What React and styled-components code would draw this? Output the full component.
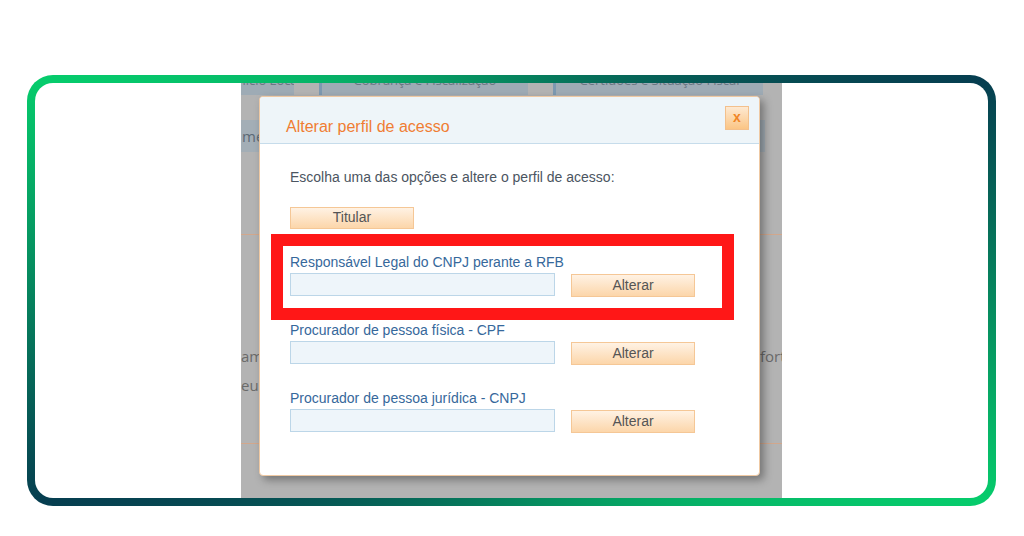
import React from 'react';
import styled, { createGlobalStyle } from 'styled-components';

const GlobalStyle = createGlobalStyle`
  html, body { margin: 0; padding: 0; background: #fff; }
  body { font-family: "Liberation Sans", Arial, sans-serif; }
`;

const Page = styled.div`
  width: 1024px;
  height: 536px;
  box-sizing: border-box;
  padding: 75px 28px 30px 27px;
`;

const Frame = styled.div`
  height: 100%;
  box-sizing: border-box;
  padding: 8px;
  border-radius: 26px;
  background: conic-gradient(from -66deg, #06cc6c 0deg, #063e50 132deg, #06cc6c 180deg, #063e50 312deg, #06cc6c 360deg);
`;

const FrameInner = styled.div`
  height: 100%;
  background: #fff;
  border-radius: 18px;
  display: flex;
  justify-content: center;
  overflow: hidden;
`;

const Shot = styled.div`
  position: relative;
  width: 541px;
  height: 100%;
  background: #b3b3b3;
  overflow: hidden;
  font-family: "Open Sans", sans-serif;
`;

const TabRow = styled.div`
  display: flex;
  height: 12px;
`;

const Tab = styled.div`
  box-sizing: border-box;
  width: ${(p) => p.$w}px;
  margin-left: ${(p) => p.$gap || 0}px;
  background: #9eabb5;
  border-left: ${(p) => (p.$edge ? '3px solid #7d99b1' : 'none')};
  overflow: hidden;
  display: flex;
  align-items: flex-end;
  justify-content: center;
  padding-bottom: 8px;
  font-size: 13px;
  line-height: 14px;
  color: #6a7783;
  white-space: nowrap;
`;

const SubBar = styled.div`
  margin-top: 25px;
  width: 523px;
  height: 32px;
  background: #a3aeb6;
  color: #5c6975;
  font-size: 15px;
  line-height: 32px;
  padding-left: 1px;
  white-space: nowrap;
  overflow: hidden;
`;

const Rule = styled.div`
  margin-top: ${(p) => p.$top}px;
  height: 1px;
  background: #d2a78c;
`;

const TextBlock = styled.div`
  margin-top: 107px;
`;

const TextLine = styled.div`
  display: grid;
  grid-template-columns: 519px 1fr;
  font-size: 15px;
  line-height: 29px;
  color: #6a6a6a;
  white-space: nowrap;
  overflow: hidden;
`;

const Modal = styled.div`
  position: absolute;
  left: 18px;
  top: 13px;
  width: 501px;
  height: 380px;
  box-sizing: border-box;
  border: 1px solid #efc9a3;
  border-radius: 4px;
  background: #fff;
  box-shadow: 4px 4px 9px rgba(0, 0, 0, 0.35);
  font-family: "Liberation Sans", Arial, sans-serif;
`;

const Header = styled.div`
  height: 47px;
  box-sizing: border-box;
  display: flex;
  justify-content: space-between;
  padding: 0 10px 0 26px;
  background: #eef5f9;
  border-bottom: 1px solid #c6dceb;
  border-radius: 3px 3px 0 0;
`;

const Title = styled.div`
  align-self: flex-end;
  padding-bottom: 7px;
  font-size: 16px;
  line-height: 18px;
  color: #f07d33;
`;

const Close = styled.div`
  margin-top: 9px;
  width: 24px;
  height: 24px;
  box-sizing: border-box;
  border: 1px solid #f3c08c;
  background: linear-gradient(#fde9d2, #fbc585);
  color: #f08526;
  font-weight: bold;
  font-size: 14px;
  line-height: 20px;
  text-align: center;
`;

const Body = styled.div`
  padding: 25px 0 0 30px;
`;

const Intro = styled.div`
  font-size: 14px;
  line-height: 16px;
  color: #4b5561;
`;

const Button = styled.div`
  width: 124px;
  height: ${(p) => p.$h || 23}px;
  box-sizing: border-box;
  margin-top: ${(p) => p.$top || 0}px;
  margin-left: ${(p) => p.$left || 0}px;
  border: 1px solid #f5c796;
  background: linear-gradient(#fff2e4, #fcd6aa);
  color: #555;
  font-size: 14px;
  line-height: ${(p) => (p.$h || 23) - 3}px;
  text-align: center;
`;

const Group = styled.div`
  margin-top: 25px;
`;

const Label = styled.div`
  font-size: 14px;
  line-height: 16px;
  color: #36689b;
`;

const Row = styled.div`
  display: flex;
  align-items: flex-start;
  margin-top: 3px;
`;

const Input = styled.div`
  width: 265px;
  height: 23px;
  box-sizing: border-box;
  border: 1px solid #bcd6e8;
  background: #eef5fa;
`;

const Highlight = styled.div`
  position: absolute;
  left: 30px;
  top: 151px;
  width: 463px;
  height: 86px;
  box-sizing: border-box;
  border: 12px solid #ff1717;
  z-index: 2;
`;

const options = [
  'Responsável Legal do CNPJ perante a RFB',
  'Procurador de pessoa física - CPF',
  'Procurador de pessoa jurídica - CNPJ',
];

export default function App() {
  return (
    <>
      <GlobalStyle />
      <Page>
        <Frame>
          <FrameInner>
            <Shot>
              <TabRow>
                <Tab $w={53}>Inicio Local</Tab>
                <Tab $w={209} $gap={25} $edge>Cobrança e Fiscalização</Tab>
                <Tab $w={210} $gap={25} $edge>Certidões e Situação Fiscal</Tab>
              </TabRow>
              <SubBar>mentos do Contribuinte</SubBar>
              <Rule $top={82} />
              <TextBlock>
                <TextLine>
                  <span>amos os dados</span>
                  <span>forto</span>
                </TextLine>
                <TextLine>
                  <span>eus dados</span>
                  <span />
                </TextLine>
              </TextBlock>
              <Rule $top={43} />

              <Modal>
                <Header>
                  <Title>Alterar perfil de acesso</Title>
                  <Close>x</Close>
                </Header>
                <Body>
                  <Intro>Escolha uma das opções e altere o perfil de acesso:</Intro>
                  <Button $h={22} $top={22}>Titular</Button>
                  {options.map((label) => (
                    <Group key={label}>
                      <Label>{label}</Label>
                      <Row>
                        <Input />
                        <Button $left={16} $top={1}>Alterar</Button>
                      </Row>
                    </Group>
                  ))}
                </Body>
              </Modal>
              <Highlight />
            </Shot>
          </FrameInner>
        </Frame>
      </Page>
    </>
  );
}
